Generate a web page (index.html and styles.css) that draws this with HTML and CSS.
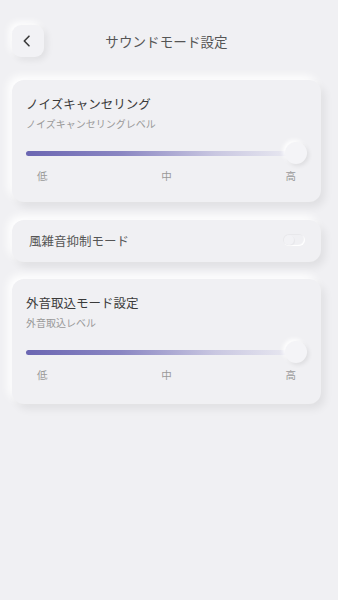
FILE: index.html
```html
<!DOCTYPE html>
<html lang="ja">
<head>
<meta charset="utf-8">
<link rel="stylesheet" href="styles.css">
</head>
<body>
<div class="app">
  <header class="header">
    <div class="back">
      <svg width="12" height="12" viewBox="0 0 12 12"><path d="M8 1.2 L3.3 6 L8 10.8" fill="none" stroke="#3a3a3a" stroke-width="1.6" stroke-linecap="round" stroke-linejoin="round"/></svg>
    </div>
    <h1 class="title">サウンドモード設定</h1>
  </header>

  <section class="card slider-card">
    <div class="card-title">ノイズキャンセリング</div>
    <div class="card-sub">ノイズキャンセリングレベル</div>
    <div class="slider">
      <div class="track"></div>
      <div class="thumb"></div>
    </div>
    <div class="ticks"><span>低</span><span>中</span><span>高</span></div>
  </section>

  <section class="card toggle-card">
    <div class="toggle-label">風雑音抑制モード</div>
    <div class="toggle"><div class="knob"></div></div>
  </section>

  <section class="card slider-card tall">
    <div class="card-title">外音取込モード設定</div>
    <div class="card-sub">外音取込レベル</div>
    <div class="slider">
      <div class="track"></div>
      <div class="thumb"></div>
    </div>
    <div class="ticks"><span>低</span><span>中</span><span>高</span></div>
  </section>
</div>
</body>
</html>
```
FILE: styles.css
```css
* { box-sizing: border-box; margin: 0; padding: 0; }
html, body {
  width: 338px;
  height: 600px;
  background: #f0f0f3;
  font-family: "Noto Sans CJK JP", "Noto Sans", sans-serif;
  overflow: hidden;
}
.app {
  padding: 25px 17px 0 12px;
  display: flex;
  flex-direction: column;
}
.header {
  position: relative;
  height: 32px;
  display: flex;
  align-items: center;
  margin-bottom: 23px;
}
.back {
  width: 32px;
  height: 32px;
  border-radius: 9px;
  background: #f2f2f5;
  box-shadow: 3px 3px 7px rgba(0,0,0,0.07), -3px -3px 7px #ffffff;
  display: flex;
  align-items: center;
  justify-content: center;
  padding-right: 3px;
}
.title {
  position: absolute;
  left: 0;
  right: 0;
  text-align: center;
  font-size: 13.5px;
  font-weight: 400;
  color: #555;
  letter-spacing: 0.1px;
  pointer-events: none;
}
.card {
  background: #f0f0f3;
  border-radius: 12px;
  box-shadow: 4px 5px 9px rgba(0,0,0,0.07), -4px -4px 9px #ffffff;
}
.slider-card {
  padding: 15px 14px 0 14px;
  height: 122px;
  margin-bottom: 18px;
}
.slider-card.tall { height: 125px; }
.card-title {
  font-size: 12.5px;
  color: #3a3a3a;
  line-height: 18px;
}
.card-sub {
  font-size: 10px;
  color: #999;
  line-height: 14px;
  margin-top: 4px;
}
.slider {
  position: relative;
  height: 22px;
  margin-top: 11px;
  display: flex;
  align-items: center;
}
.track {
  height: 5px;
  width: calc(100% - 11px);
  border-radius: 3px;
  background: linear-gradient(90deg, #6b66b2 0%, #8a86c2 35%, #c9c7e1 70%, #ebebf2 100%);
}
.thumb {
  position: absolute;
  right: 0;
  top: 0;
  width: 22px;
  height: 22px;
  border-radius: 50%;
  background: #f4f4f7;
  box-shadow: 2px 2px 4px rgba(0,0,0,0.08), -2px -2px 4px #ffffff;
}
.ticks {
  display: flex;
  justify-content: space-between;
  padding: 0 11px;
  margin-top: 5px;
  font-size: 10.5px;
  color: #999;
  line-height: 14px;
}
.toggle-card {
  height: 42px;
  padding: 0 16px 0 17px;
  display: flex;
  align-items: center;
  justify-content: space-between;
  margin-bottom: 17px;
}
.toggle-label {
  font-size: 12.5px;
  color: #555;
  margin-top: -2px;
}
.toggle {
  width: 22px;
  height: 12px;
  border-radius: 6px;
  background: #f0f0f3;
  box-shadow: inset 1px 1px 1px rgba(0,0,0,0.035), inset -1px -1px 1px #fff;
  position: relative;
  margin-top: -2px;
}
.knob {
  position: absolute;
  left: 1px;
  top: 1px;
  width: 10px;
  height: 10px;
  border-radius: 50%;
  background: #f2f2f5;
  box-shadow: 1px 1px 1px rgba(0,0,0,0.04);
}
```
